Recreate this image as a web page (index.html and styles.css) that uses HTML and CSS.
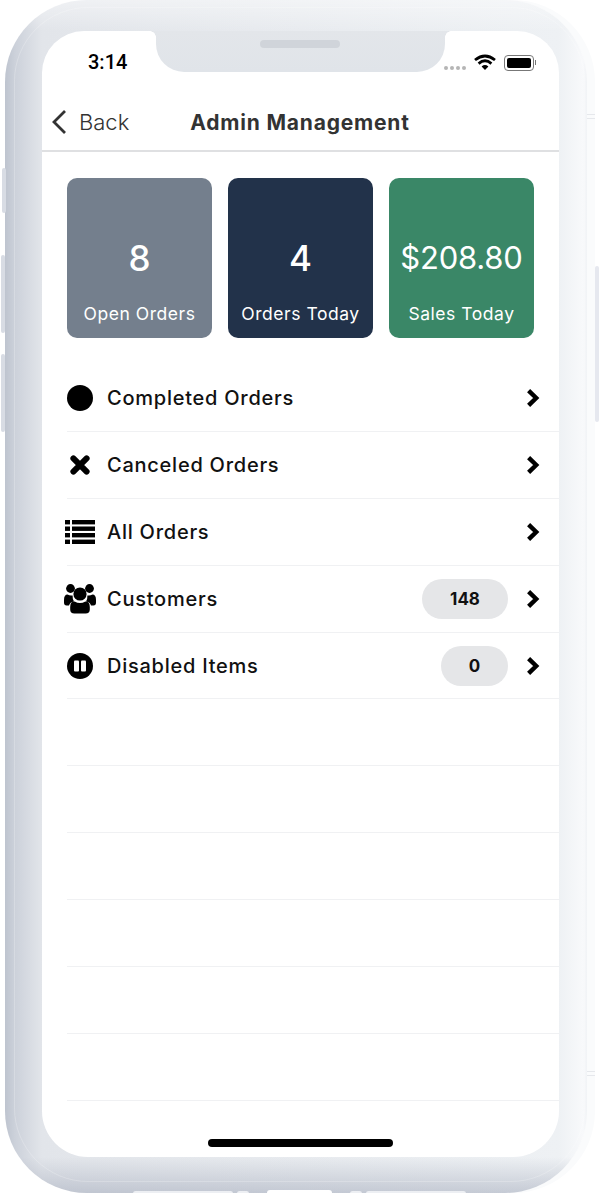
FILE: index.html
```html
<!DOCTYPE html>
<html lang="en">
<head>
    <meta charset="UTF-8">
    <meta name="viewport" content="width=device-width, initial-scale=1.0">
    <title>Admin Management</title>
    <link rel="stylesheet" href="styles.css">
</head>
<body>
    <div class="phone">
        <span class="side-btn btn-mute"></span>
        <span class="side-btn btn-up"></span>
        <span class="side-btn btn-down"></span>
        <span class="side-btn btn-power"></span>
        <span class="band band-top"></span>
        <span class="band band-bottom"></span>

        <div class="screen">
            <div class="notch"><span class="speaker"></span></div>

            <div class="status-bar">
                <span class="clock">3:14</span>
                <div class="status-icons">
                    <span class="signal"><i></i><i></i><i></i><i></i></span>
                    <svg class="wifi" viewBox="0 0 22 16" width="22" height="16">
                        <path d="M1 6 Q11 -2 21 6" fill="none" stroke="#000" stroke-width="2.8"/>
                        <path d="M4.6 9.6 Q11 4 17.4 9.6" fill="none" stroke="#000" stroke-width="2.8"/>
                        <path d="M7.6 12.4 Q11 9.6 14.4 12.4 L11 16 Z" fill="#000"/>
                    </svg>
                    <span class="battery"><i></i></span>
                </div>
            </div>

            <div class="nav-bar">
                <div class="back">
                    <svg viewBox="0 0 16 26" width="16" height="26">
                        <path d="M14 2 L3 13 L14 24" fill="none" stroke="#333" stroke-width="2.8"/>
                    </svg>
                    <span>Back</span>
                </div>
                <h1>Admin Management</h1>
                <div></div>
            </div>

            <div class="cards">
                <div class="card card-gray">
                    <div class="card-value">8</div>
                    <div class="card-label">Open Orders</div>
                </div>
                <div class="card card-navy">
                    <div class="card-value">4</div>
                    <div class="card-label">Orders Today</div>
                </div>
                <div class="card card-green">
                    <div class="card-value light">$208.80</div>
                    <div class="card-label">Sales Today</div>
                </div>
            </div>

            <ul class="menu">
                <li class="row">
                    <span class="row-icon">
                        <svg viewBox="0 0 26 26" width="26" height="26"><circle cx="13" cy="13" r="13"/></svg>
                    </span>
                    <span class="row-label">Completed Orders</span>
                    <svg class="chevron" viewBox="0 0 14 20" width="14" height="20"><path d="M2.6 2.6 L10.2 10 L2.6 17.4"/></svg>
                </li>
                <li class="row">
                    <span class="row-icon">
                        <svg viewBox="0 0 20 20" width="20" height="20"><path class="cross" d="M3.4 3.4 L16.6 16.6 M16.6 3.4 L3.4 16.6"/></svg>
                    </span>
                    <span class="row-label">Canceled Orders</span>
                    <svg class="chevron" viewBox="0 0 14 20" width="14" height="20"><path d="M2.6 2.6 L10.2 10 L2.6 17.4"/></svg>
                </li>
                <li class="row">
                    <span class="row-icon">
                        <svg viewBox="0 0 30 24" width="30" height="24">
                            <rect x="0" y="0" width="5" height="4.4"/><rect x="7" y="0" width="23" height="4.4"/>
                            <rect x="0" y="6.5" width="5" height="4.4"/><rect x="7" y="6.5" width="23" height="4.4"/>
                            <rect x="0" y="13" width="5" height="4.4"/><rect x="7" y="13" width="23" height="4.4"/>
                            <rect x="0" y="19.6" width="5" height="4.4"/><rect x="7" y="19.6" width="23" height="4.4"/>
                        </svg>
                    </span>
                    <span class="row-label">All Orders</span>
                    <svg class="chevron" viewBox="0 0 14 20" width="14" height="20"><path d="M2.6 2.6 L10.2 10 L2.6 17.4"/></svg>
                </li>
                <li class="row">
                    <span class="row-icon">
                        <svg viewBox="0 0 32 30" width="32" height="30">
                            <circle cx="6.5" cy="4.5" r="4.4"/><circle cx="25.5" cy="4.5" r="4.4"/>
                            <path d="M0 16 Q0 10.5 3.5 10.5 Q6 12 8.6 11.4 Q8.4 15 10 17.6 Q6 18.4 5 21.4 H2.5 Q0 21.4 0 18.5 Z"/>
                            <path d="M32 16 Q32 10.5 28.5 10.5 Q26 12 23.4 11.4 Q23.6 15 22 17.6 Q26 18.4 27 21.4 H29.5 Q32 21.4 32 18.5 Z"/>
                            <circle cx="16" cy="10" r="6.6"/>
                            <path d="M6.2 23 Q6.2 17.6 10.6 17.6 Q16 20.6 21.4 17.6 Q25.8 17.6 25.8 23 V25.6 Q25.8 29.6 21.6 29.6 H10.4 Q6.2 29.6 6.2 25.6 Z"/>
                        </svg>
                    </span>
                    <span class="row-label">Customers</span>
                    <span class="pill pill-wide">148</span>
                    <svg class="chevron" viewBox="0 0 14 20" width="14" height="20"><path d="M2.6 2.6 L10.2 10 L2.6 17.4"/></svg>
                </li>
                <li class="row">
                    <span class="row-icon">
                        <svg viewBox="0 0 26 26" width="26" height="26">
                            <circle cx="13" cy="13" r="13"/>
                            <rect x="7" y="7.4" width="5" height="11.2" rx="1" fill="#fff"/>
                            <rect x="14" y="7.4" width="5" height="11.2" rx="1" fill="#fff"/>
                        </svg>
                    </span>
                    <span class="row-label">Disabled Items</span>
                    <span class="pill">0</span>
                    <svg class="chevron" viewBox="0 0 14 20" width="14" height="20"><path d="M2.6 2.6 L10.2 10 L2.6 17.4"/></svg>
                </li>
                <li class="row"></li>
                <li class="row"></li>
                <li class="row"></li>
                <li class="row"></li>
                <li class="row"></li>
                <li class="row"></li>
            </ul>

            <div class="home-bar"></div>
        </div>

        <div class="port">
            <i class="holes"></i><i class="dot"></i><i class="plug"></i><i class="dot"></i><i class="holes"></i>
        </div>
    </div>
</body>
</html>
```

FILE: styles.css
```css
* {
    box-sizing: border-box;
}

html, body {
    margin: 0;
    height: 1193px;
    overflow: hidden;
    background-color: #FFFFFF;
}

body {
    font-family: Inter, "Liberation Sans", sans-serif;
    color: #111111;
    padding-left: 5px;
}

/* device frame */
.phone {
    position: relative;
    width: 582px;
    height: 1193px;
    padding: 31px 28px 36px 37px;
    border-radius: 82px;
    background:
        linear-gradient(180deg, rgba(255, 255, 255, 0.45) 0, rgba(255, 255, 255, 0) 31px),
        linear-gradient(0deg, rgba(165, 172, 188, 0.55) 0, rgba(165, 172, 188, 0) 36px),
        linear-gradient(90deg, #BEC4CF 0, #CCD1DA 10px, #E2E5EA 37px, #EEF1F4 554px, #F8F9FB 578px, #F1F3F6 582px);
    box-shadow: 8px 0 0 #FAFBFC;
}

.phone::before {
    content: "";
    position: absolute;
    top: 7px;
    right: 2px;
    bottom: 11px;
    left: 9px;
    border: 1px solid rgba(255, 255, 255, 0.22);
    border-radius: 74px;
}

.side-btn {
    position: absolute;
    width: 4px;
    border-radius: 3px;
    background-color: #D8DCE4;
}

.btn-mute {
    left: -3px;
    top: 168px;
    height: 45px;
}

.btn-up {
    left: -4px;
    top: 255px;
    height: 78px;
}

.btn-down {
    left: -4px;
    top: 354px;
    height: 78px;
}

.btn-power {
    right: -12px;
    top: 266px;
    height: 156px;
    background-color: #E6E8EF;
}

.band {
    position: absolute;
    right: -8px;
    width: 8px;
    height: 5px;
    border-top: 1px solid #E6E8EC;
    border-bottom: 1px solid #E6E8EC;
}

.band-top {
    top: 114px;
}

.band-bottom {
    top: 1071px;
}

.port {
    position: absolute;
    left: 128px;
    bottom: -3px;
    display: flex;
    align-items: flex-end;
}

.port i {
    display: block;
    height: 5px;
    border-radius: 3px;
    background-color: #EDEFF3;
}

.port .holes {
    width: 100px;
}

.port .dot {
    width: 12px;
    margin: 0 4px;
}

.port .plug {
    width: 65px;
    height: 6px;
    margin: 0 14px;
    background-color: #FFFFFF;
}

.screen {
    position: relative;
    height: 100%;
    overflow: hidden;
    background-color: #FFFFFF;
    border-radius: 42px 42px 46px 46px;
}

.notch {
    position: absolute;
    top: 0;
    left: 114px;
    width: 289px;
    height: 41px;
    border-radius: 0 0 28px 28px;
    background: linear-gradient(180deg, #E3E6EA, #E0E4E9);
    display: flex;
    justify-content: center;
    padding: 9px 1px 0 0;
}

.notch::before, .notch::after {
    content: "";
    position: absolute;
    top: 0;
    width: 6px;
    height: 6px;
}

.notch::before {
    left: -6px;
    background: radial-gradient(circle at 0 100%, transparent 5.5px, #E3E6EA 6px);
}

.notch::after {
    right: -6px;
    background: radial-gradient(circle at 100% 100%, transparent 5.5px, #E3E6EA 6px);
}

.speaker {
    width: 80px;
    height: 8px;
    border-radius: 4px;
    background-color: #D0D4DA;
}

/* status bar */
.status-bar {
    height: 59px;
    display: flex;
    justify-content: space-between;
    padding: 21px 25px 0 46px;
}

.clock {
    font-family: Roboto, sans-serif;
    font-size: 20px;
    font-weight: 500;
    line-height: 20px;
    color: #000000;
}

.status-icons {
    display: flex;
    align-items: flex-start;
    height: 20px;
}

.signal {
    display: flex;
    gap: 2px;
    margin: 14px 8px 0 0;
}

.signal i {
    width: 4px;
    height: 4px;
    border-radius: 50%;
    background-color: #B5B5B5;
}

.wifi {
    margin: 2px 8px 0 0;
}

.battery {
    position: relative;
    width: 30px;
    height: 16px;
    margin-top: 3px;
    padding: 2px;
    border: 1px solid #777777;
    border-radius: 4px;
}

.battery::after {
    content: "";
    position: absolute;
    top: 4px;
    right: -3px;
    width: 1px;
    height: 5px;
    background-color: #777777;
}

.battery i {
    display: block;
    height: 100%;
    border-radius: 2px;
    background-color: #000000;
}

/* nav */
.nav-bar {
    height: 62px;
    display: grid;
    grid-template-columns: 1fr auto 1fr;
    align-items: center;
    padding: 4px 10px 0 9px;
    border-bottom: 2px solid #DFE0E2;
}

.back {
    display: flex;
    align-items: center;
    gap: 12px;
    font-size: 22px;
    font-weight: 300;
    color: #333333;
}

.nav-bar h1 {
    margin: 0;
    font-size: 21px;
    font-weight: 700;
    letter-spacing: 0.8px;
    color: #333333;
}

/* stat cards */
.cards {
    display: flex;
    gap: 16px;
    padding: 26px 25px 27px;
}

.card {
    width: 145px;
    height: 160px;
    border-radius: 10px;
    color: #FFFFFF;
    text-align: center;
    padding-top: 60px;
}

.card-gray {
    background-color: #747F8D;
}

.card-navy {
    background-color: #22324A;
}

.card-green {
    background-color: #3A8767;
}

.card-value {
    height: 40px;
    font-size: 35px;
    font-weight: 500;
    line-height: 40px;
}

.card-value.light {
    font-weight: 400;
    font-size: 31px;
    letter-spacing: -0.2px;
}

.card-label {
    margin-top: 26px;
    font-size: 17.5px;
    line-height: 20px;
    letter-spacing: 0.55px;
}

/* menu rows */
.menu {
    list-style: none;
    margin: 0 0 0 25px;
    padding: 0;
}

.row {
    height: 66.9px;
    display: flex;
    align-items: center;
    padding-right: 19px;
    border-bottom: 1px solid #F0F1F3;
}

.row-icon {
    width: 26px;
    display: flex;
    justify-content: center;
    flex-shrink: 0;
    margin-right: 14px;
}

.row-icon svg {
    flex-shrink: 0;
    fill: #000000;
}

.cross {
    fill: none;
    stroke: #000000;
    stroke-width: 6;
    stroke-linecap: round;
}

.row-label {
    flex: 1;
    padding-top: 1px;
    font-size: 20px;
    letter-spacing: 0.75px;
    font-weight: 450;
    color: #111111;
}

.pill {
    width: 67px;
    height: 40px;
    border-radius: 20px;
    background-color: #E5E6E8;
    font-size: 17px;
    font-weight: 700;
    line-height: 40px;
    text-align: center;
    margin-right: 18px;
}

.pill-wide {
    width: 86px;
}

.chevron {
    flex-shrink: 0;
}

.chevron path {
    fill: none;
    stroke: #000000;
    stroke-width: 4.4;
}

.home-bar {
    position: absolute;
    left: 166px;
    bottom: 10px;
    width: 185px;
    height: 8px;
    border-radius: 4px;
    background-color: #000000;
}
```
